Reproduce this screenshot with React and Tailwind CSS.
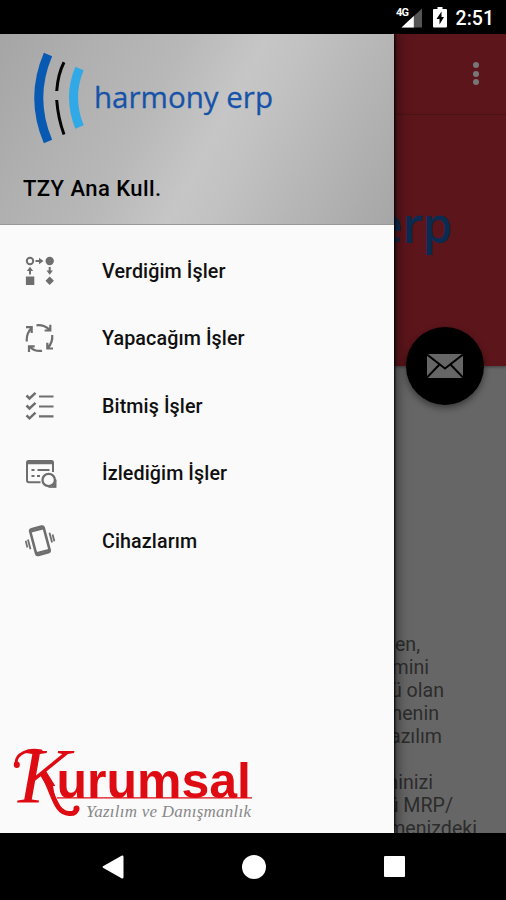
import { useState } from "react";

const ProcessIcon = () => (
  <svg width="30" height="30" viewBox="0 0 30 30" fill="#6e6e6e">
    <circle cx="5" cy="5" r="3.2" fill="none" stroke="#6e6e6e" strokeWidth="2" />
    <circle cx="24.7" cy="5" r="4.2" />
    <path d="M10.500 4h3.500V1.800L18.500 5l-4.500 3.200V6h-3.500z" />
    <path d="M4 18.500v-3.500H1.800L5 10.800l3.200 4.200H6v3.500z" />
    <path d="M23.700 11V14.500h-2.200l3.200 4.200 3.200-4.200h-2.200V11z" />
    <path d="M.9 20.500h8.400v8.400H.9zM24.700 20.500l4.200 4.200-4.200 4.200-4.200-4.200z" />
  </svg>
)

const CycleIcon = () => (
  <svg width="30" height="30" viewBox="0 0 30 30" fill="none" stroke="#6e6e6e" strokeWidth="2.200">
    <path d="M11.500 2.300C17 1.500 21 3.500 24.800 6.800M25.300 1.800v5.700h-5.700" />
    <path d="M27.200 12C27.800 18 26 21.500 22.800 25M28 25.500h-5.700v-5.700" />
    <path d="M17 27.800C12 28.500 8 27 4.800 23.700M4 29v-5.700h5.700" />
    <path d="M1.800 18.500C1.300 13 3 8.700 6.500 5M1 4.200h5.700v5.700" />
  </svg>
)

const CheckListIcon = () => (
  <svg width="30" height="30" viewBox="0 0 30 30" fill="none" stroke="#6e6e6e" strokeWidth="2.500">
    <path d="M1.500 4.500l3 3 6-5.700M1.500 14.500l3 3 6-5.700M1.500 24.300l3 3 6-5.700" />
    <path d="M14 5.500h14.500M14 15.500h14.500M14 25.300h14.500" strokeWidth="2.200" />
  </svg>
)

const WatchIcon = () => (
  <svg width="34" height="30" viewBox="0 0 34 30" fill="none" stroke="#6e6e6e" strokeWidth="2">
    <path d="M15.500 24.300H4A2 2 0 0 1 2 22.300V4.500Q2 3 3.500 3H26.500Q28 3 28 4.500V14" />
    <path d="M2 4.500H28" strokeWidth="3.500" />
    <path d="M6.500 12h3M12.500 12h12M6.500 18h3M12 18h3" strokeWidth="2.200" />
    <circle cx="23.700" cy="22" r="6.200" strokeWidth="2.300" />
    <path d="M31.200 21.700v8H23.500Q30 28.500 31.200 21.700z" fill="#6e6e6e" strokeWidth="0.500" />
  </svg>
)

const DeviceIcon = () => (
  <svg width="32" height="32" viewBox="0 0 32 32" fill="none" stroke="#6e6e6e" strokeWidth="2.600">
    <g transform="rotate(-15 15 16)">
      <rect x="8" y="2.500" width="14" height="26.500" rx="1.800" />
      <path d="M8 4.500h14M8 27h14" strokeWidth="2.200" />
      <path d="M3.700 11.500v10M1.200 12v7M26.300 10.500v10M28.800 13v7" strokeWidth="1.800" />
    </g>
  </svg>
)

const menuItems = [
  { title: 'Verdiğim İşler', icon: <ProcessIcon /> },
  { title: 'Yapacağım İşler', icon: <CycleIcon /> },
  { title: 'Bitmiş İşler', icon: <CheckListIcon /> },
  { title: 'İzlediğim İşler', icon: <WatchIcon /> },
  { title: 'Cihazlarım', icon: <DeviceIcon /> },
]

const StatusBar = () => (
  <div className="h-[34px] flex items-center justify-end bg-black pr-3">
    <svg width="52" height="24" viewBox="0 0 52 24" className="mr-2">
      <text x="0" y="11" fill="#fff" fontFamily="Roboto" fontWeight="700" fontSize="11" textLength="13">4G</text>
      <path d="M26 3.500V22.500H5.500z" fill="#555" />
      <path d="M17.800 11V22.500H5.500z" fill="#fff" />
      <path d="M41.500 2h5v2h3.500q1 0 1 1V21.500q0 1-1 1H38q-1 0-1-1V5q0-1 1-1h3.500z" fill="#fff" />
      <path d="M45.500 6.500L40.500 14h3v5.500L48 12h-2.500z" fill="#000" />
    </svg>
    <span className="pt-[3px] text-[19.500px] leading-6 font-medium text-white">2:51</span>
  </div>
)

const HarmonyLogo = () => (
  <svg width="260" height="96" viewBox="0 0 260 96" fill="none">
    <path d="M24 4.500Q5.500 48 24 91.500" stroke="#0759b1" strokeWidth="9" />
    <path d="M40 12.300Q34 24 32.700 41M32.700 50Q34 68 40 84.500" stroke="#050505" strokeWidth="3" />
    <path d="M55.500 18.500Q43.500 47 55.500 77" stroke="#31a9e6" strokeWidth="9" />
    <text x="70" y="58" fill="#1653a8" stroke="#1653a8" strokeWidth="0.300" fontFamily="Open Sans" fontSize="30" fontWeight="500" textLength="179" lengthAdjust="spacingAndGlyphs">harmony erp</text>
  </svg>
)

const KurumsalLogo = () => (
  <svg width="250" height="80" viewBox="0 0 250 80">
    {/* the right foot of the K is hidden, the swash takes its place */}
    <clipPath id="kFoot">
      <path d="M0 0H80V40H42L44 51H36V60H0z" />
    </clipPath>
    <text x="7" y="55.500" fill="#df0b12" fontFamily="Liberation Serif" fontStyle="italic" fontSize="78" textLength="53" lengthAdjust="spacingAndGlyphs" clipPath="url(#kFoot)">K</text>
    <g fill="none" stroke="#df0b12" strokeLinecap="round">
      <path d="M30 5C17 2 5 8 5 17" strokeWidth="3" />
      <path d="M5.800 18.500v.5" strokeWidth="6" />
      <path d="M34 32C43 50 45 67 58 67.500Q65 68 65.500 63" strokeWidth="5" />
      <path d="M65.500 62.500v.5" strokeWidth="6" />
      <path d="M46 51.800H241" strokeWidth="1.200" strokeLinecap="butt" />
    </g>
    <text x="45.500" y="51.500" fill="#df0b12" fontFamily="Liberation Sans" fontWeight="700" fontSize="50" textLength="194.500" lengthAdjust="spacingAndGlyphs">urumsal</text>
    <text x="75" y="70.500" fill="#888" fontFamily="Liberation Serif" fontStyle="italic" fontSize="17" textLength="165" lengthAdjust="spacing">Yazılım ve Danışmanlık</text>
  </svg>
)

const Drawer = () => {
  const [selected, setSelected] = useState(null)

  return (
    <div className="absolute left-0 top-0 w-[394px] h-full flex flex-col bg-[#fafafa] shadow-[1px_0_2px_#000,3px_0_12px_rgba(0,0,0,0.5)]">
      <div className="h-[191px] shrink-0 pl-6 pt-4 flex flex-col bg-[linear-gradient(118deg,#a5a5a5_0%,#b0b0b0_20%,#b8b8b8_38%,#c6c6c6_54%,#c2c2c2_62%,#b6b6b6_78%,#a6a6a6_100%)] border-b border-[#999]">
        <HarmonyLogo />
        <div className="-ml-px mt-[31px] text-[22px] leading-6 font-medium text-black tracking-[0.45px]">TZY Ana Kull.</div>
      </div>
      <div className="pt-3 flex flex-col">
        {menuItems.map((item, i) => (
          <button key={i} onClick={() => setSelected(i)}
            className="h-[67.500px] pl-[25px] flex items-center text-left">
            <span className="w-[77px]">{item.icon}</span>
            <span className="pt-0.5 text-[19.700px] font-medium text-[#101010] tracking-[0.1px]">{item.title}</span>
          </button>
        ))}
      </div>
      <div className="mt-auto pl-[11px] pb-[7px]">
        <KurumsalLogo />
      </div>
    </div>
  )
}

const HomePage = () => (
  <div className="h-full flex flex-col bg-[#666]">
    <div className="h-[81px] shrink-0 flex items-center justify-end pr-[27px] bg-[#5c151b] border-b border-[#50151a]">
      <div className="flex flex-col gap-[2.500px] pb-px">
        <span className="w-1.5 h-1.5 rounded-full bg-[#777]"></span>
        <span className="w-1.5 h-1.5 rounded-full bg-[#777]"></span>
        <span className="w-1.5 h-1.5 rounded-full bg-[#777]"></span>
      </div>
    </div>
    <div className="h-[251px] shrink-0 relative bg-[#5c151b] pt-[76px] pr-[50px] flex justify-end items-start shadow-[0_1px_3px_rgba(0,0,0,0.4)]">
      <svg width="90" height="80" viewBox="0 0 90 80">
        <text x="9 36.500 56.500" y="52" fill="#0b2b51" fontFamily="Open Sans" fontWeight="600" fontSize="48">erp</text>
      </svg>
      <div className="absolute right-[22px] -bottom-[39px] w-[78px] h-[78px] rounded-full bg-black flex items-center justify-center shadow-[0_3px_7px_rgba(0,0,0,0.45)]">
        <svg width="36" height="24" viewBox="0 0 36 24">
          <path d="M0 0h36v24H0z" fill="#666" />
          <path d="M0 .5l18 14L36 .5M0 23.500l12.500-13M36 23.500l-12.500-13" fill="none" stroke="#000" strokeWidth="2" />
        </svg>
      </div>
    </div>
    <div className="mt-[267px] text-[19.600px] leading-[23px] text-right text-[#2c2c2c] whitespace-nowrap">
      <p className="pr-[86px]">en,</p>
      <p className="pr-[77px]">mini</p>
      <p className="pr-[62px]">ü olan</p>
      <p className="pr-[67px]">menin</p>
      <p className="pr-16">azılım</p>
      <p>&nbsp;</p>
      <p className="pr-[73px]">ninizi</p>
      <p className="pr-[53px]">ü MRP/</p>
      <p className="pr-[29px]">menizdeki</p>
    </div>
  </div>
)

const NavBar = () => (
  <div className="h-[67px] flex items-center bg-black pl-[102px]">
    <svg width="22" height="24" viewBox="0 0 22 24" fill="#fff">
      <path d="M1 11.200L19.500.7Q21.500 0 21.500 2v20q0 2-2 1.200L1 12.800q-1-.8 0-1.600z" />
    </svg>
    <div className="ml-[118px] w-6 h-6 rounded-full bg-white"></div>
    <div className="ml-[117.500px] w-[21px] h-[21px] rounded-[1px] bg-white"></div>
  </div>
)

const App = () => {
  return (
    <div className="w-[506px] h-[900px] flex flex-col overflow-hidden bg-black font-['Roboto',sans-serif]">
      <StatusBar />
      <div className="relative h-[799px] overflow-hidden">
        <HomePage />
        <Drawer />
      </div>
      <NavBar />
    </div>
  )
}

export default App;
